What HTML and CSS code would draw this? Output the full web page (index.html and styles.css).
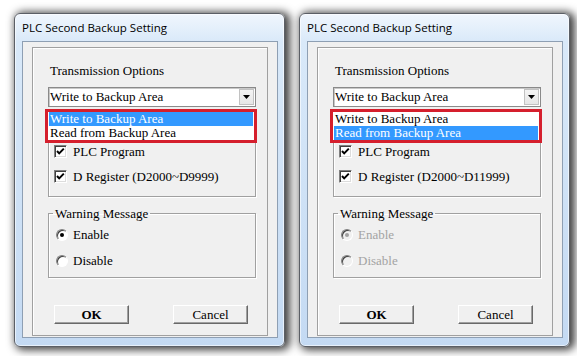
FILE: index.html
```html
<!DOCTYPE html>
<html lang="en">
<head>
  <meta charset="UTF-8" />
  <title>PLC Second Backup Setting</title>
  <link rel="stylesheet" href="styles.css">
</head>
<body>
<div class="screen">

  <!-- write mode -->
  <div class="window">
    <div class="titlebar">PLC Second Backup Setting</div>
    <div class="client">
      <div class="panel">
        <div class="caption">Transmission Options</div>
        <div class="combo">
          <span class="combo-text">Write to Backup Area</span>
          <span class="combo-arrow"><svg width="7" height="4" viewBox="0 0 7 4"><path d="M0 0h7L3.5 4z" fill="#000"/></svg></span>
        </div>
        <ul class="droplist">
          <li class="selected">Write to Backup Area</li>
          <li>Read from Backup Area</li>
        </ul>
        <div class="group data-group">
          <div class="check"><span class="box"><svg width="11" height="11" viewBox="0 0 11 11"><path d="M2 5l2.2 2.4L8.8 2.6" fill="none" stroke="#000" stroke-width="2"/></svg></span>PLC Program</div>
          <div class="check"><span class="box"><svg width="11" height="11" viewBox="0 0 11 11"><path d="M2 5l2.2 2.4L8.8 2.6" fill="none" stroke="#000" stroke-width="2"/></svg></span>D Register (D2000~D9999)</div>
        </div>
        <fieldset class="group warn-group">
          <legend>Warning Message</legend>
          <div class="radio"><span class="dot on"></span>Enable</div>
          <div class="radio"><span class="dot"></span>Disable</div>
        </fieldset>
        <div class="buttons">
          <div class="btn default">OK</div>
          <div class="btn">Cancel</div>
        </div>
      </div>
    </div>
  </div>

  <!-- read mode -->
  <div class="window">
    <div class="titlebar">PLC Second Backup Setting</div>
    <div class="client">
      <div class="panel">
        <div class="caption">Transmission Options</div>
        <div class="combo">
          <span class="combo-text">Write to Backup Area</span>
          <span class="combo-arrow"><svg width="7" height="4" viewBox="0 0 7 4"><path d="M0 0h7L3.5 4z" fill="#000"/></svg></span>
        </div>
        <ul class="droplist">
          <li>Write to Backup Area</li>
          <li class="selected">Read from Backup Area</li>
        </ul>
        <div class="group data-group">
          <div class="check"><span class="box"><svg width="11" height="11" viewBox="0 0 11 11"><path d="M2 5l2.2 2.4L8.8 2.6" fill="none" stroke="#000" stroke-width="2"/></svg></span>PLC Program</div>
          <div class="check"><span class="box"><svg width="11" height="11" viewBox="0 0 11 11"><path d="M2 5l2.2 2.4L8.8 2.6" fill="none" stroke="#000" stroke-width="2"/></svg></span>D Register (D2000~D11999)</div>
        </div>
        <fieldset class="group warn-group disabled">
          <legend>Warning Message</legend>
          <div class="radio"><span class="dot on"></span>Enable</div>
          <div class="radio"><span class="dot"></span>Disable</div>
        </fieldset>
        <div class="buttons">
          <div class="btn default">OK</div>
          <div class="btn">Cancel</div>
        </div>
      </div>
    </div>
  </div>

</div>
</body>
</html>
```

FILE: styles.css
```css
body {
  margin: 0;
  background: #fff;
  font-family: "Liberation Serif", "Times New Roman", serif;
  font-size: 13px;
  color: #000;
}
.screen {
  height: 356px;
  box-sizing: border-box;
  overflow: hidden;
  display: flex;
  gap: 14px;
  padding: 13px 0 0 14px;
}
.window {
  width: 271px;
  height: 334px;
  box-sizing: border-box;
  display: flex;
  flex-direction: column;
  padding: 0 6px 8px 7px;
  border: 1px solid #5b5f66;
  border-radius: 6px;
  background: linear-gradient(#f0f6fd, #d9e9f9 28px, #c4daf3);
  box-shadow: inset 0 0 0 1px rgba(255, 255, 255, 0.6), 3px 1px 9px 2px rgba(0, 0, 0, 0.75);
}
.titlebar {
  height: 27px;
  line-height: 27px;
  font-family: "Open Sans", sans-serif;
  font-size: 11.5px;
  color: #000;
}
.client {
  flex: 1;
  display: flex;
  flex-direction: column;
  padding: 5px 9px 1px 9px;
  background: #f0f0f0;
  border: 1px solid #8e9fb3;
}
.panel {
  flex: 1;
  position: relative;
  padding: 15px 11px 0 15px;
  border: 1px solid #a0a0a0;
  box-shadow: inset 1px 1px 0 #fff;
}
.caption {
  line-height: 15px;
  margin-left: 2px;
}
.combo {
  margin-top: 9px;
  height: 20px;
  box-sizing: border-box;
  display: flex;
  background: #fff;
  border: 1px solid #8a8a8a;
  box-shadow: inset 1px 1px 0 #c8c8c8;
}
.combo-text {
  flex: 1;
  line-height: 18px;
  padding-left: 1px;
}
.combo-arrow {
  width: 15px;
  height: 16px;
  margin: 1px;
  box-sizing: border-box;
  display: flex;
  align-items: center;
  justify-content: center;
  border: 1px solid #c2c2c2;
  background: linear-gradient(#f4f4f4, #e6e6e6);
}

/* open list, drawn over the dialog */
.droplist {
  position: absolute;
  left: 12px;
  top: 61px;
  width: 212px;
  box-sizing: border-box;
  margin: 0;
  padding: 0 1px;
  list-style: none;
  background: #fff;
  border: 3px solid #d51f2d;
  z-index: 5;
}
.droplist li {
  line-height: 14px;
  padding-left: 1px;
}
.droplist .selected {
  background: #3399ff;
  color: #fff;
}

.group {
  width: 208px;
  box-sizing: border-box;
  border: 1px solid #a0a0a0;
  box-shadow: inset 1px 1px 0 #fff, 1px 1px 0 #fff;
}
.data-group {
  margin-top: 7px;
  padding: 29px 0 12px 5px;
  display: flex;
  flex-direction: column;
  gap: 10px;
}
.check {
  display: flex;
  align-items: center;
  gap: 6px;
  line-height: 15px;
}
.box {
  width: 13px;
  height: 13px;
  box-sizing: border-box;
  display: flex;
  align-items: center;
  justify-content: center;
  background: #fff;
  border: 1px solid;
  border-color: #808080 #fff #fff #808080;
  box-shadow: inset 1px 1px 0 #404040, inset -1px -1px 0 #dcdcdc;
}
.warn-group {
  margin: 9px 0 0;
  min-width: 0;
  padding: 6px 0 9px 7px;
  display: flex;
  flex-direction: column;
  gap: 11px;
}
.warn-group legend {
  margin-left: -3px;
  padding: 0 2px;
  line-height: 15px;
}
.radio {
  display: flex;
  align-items: center;
  gap: 5px;
  line-height: 15px;
}
.dot {
  width: 12px;
  height: 12px;
  box-sizing: border-box;
  display: flex;
  align-items: center;
  justify-content: center;
  border-radius: 50%;
  background: #fff;
  border: 1px solid;
  border-color: #808080 #fff #fff #808080;
  box-shadow: inset 1px 1px 0 #404040;
}
.dot.on::after {
  content: "";
  width: 4px;
  height: 4px;
  border-radius: 50%;
  background: #000;
}
.disabled .radio {
  color: #a3a3a3;
}
.disabled .dot {
  background: #f0f0f0;
}
.disabled .dot.on::after {
  background: #a0a0a0;
}

.buttons {
  margin: 27px 0 0 6px;
  display: flex;
  gap: 44px;
}
.btn {
  width: 75px;
  height: 19px;
  box-sizing: border-box;
  text-align: center;
  line-height: 17px;
  background: #f0f0f0;
  border: 1px solid;
  border-color: #fff #696969 #696969 #fff;
  box-shadow: inset -1px -1px 0 #a0a0a0;
}
.btn.default {
  font-weight: bold;
}
```
